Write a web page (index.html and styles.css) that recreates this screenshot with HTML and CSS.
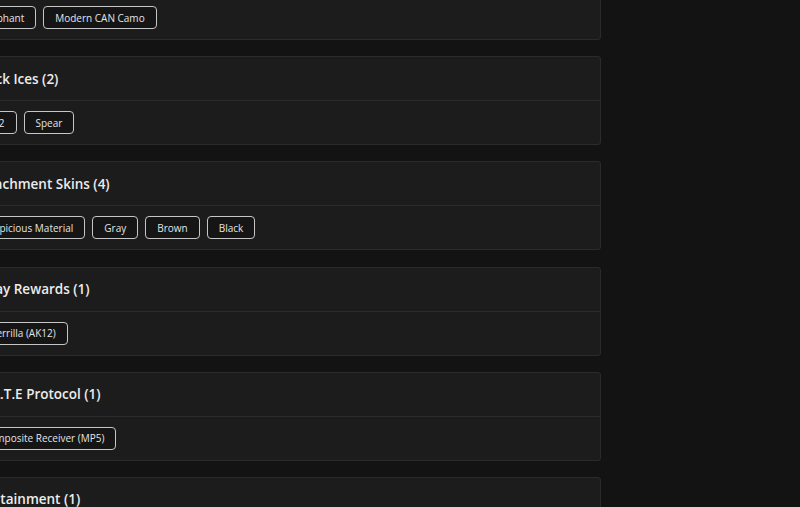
FILE: index.html
```html
<!DOCTYPE html>
<html lang="en">
<head>
<meta charset="utf-8">
<title>Categories</title>
<link rel="stylesheet" href="styles.css">
</head>
<body>
<main class="list">
  <section class="card">
    <header class="card-head">Camo Pack (2)</header>
    <div class="card-body"><span class="chip">Elephant</span><span class="chip">Modern CAN Camo</span></div>
  </section>
  <section class="card">
    <header class="card-head">Black Ices (2)</header>
    <div class="card-body"><span class="chip">Ice 2</span><span class="chip">Spear</span></div>
  </section>
  <section class="card">
    <header class="card-head">Attachment Skins (4)</header>
    <div class="card-body"><span class="chip">Suspicious Material</span><span class="chip">Gray</span><span class="chip">Brown</span><span class="chip">Black</span></div>
  </section>
  <section class="card">
    <header class="card-head">Relay Rewards (1)</header>
    <div class="card-body"><span class="chip">Guerrilla (AK12)</span></div>
  </section>
  <section class="card">
    <header class="card-head">M.A.T.E Protocol (1)</header>
    <div class="card-body"><span class="chip">Composite Receiver (MP5)</span></div>
  </section>
  <section class="card">
    <header class="card-head">Containment (1)</header>
    <div class="card-body"><span class="chip">Containment Unit</span></div>
  </section>
</main>
</body>
</html>
```
FILE: styles.css
```css
html, body {
  margin: 0;
  padding: 0;
  background: #131313;
  overflow: hidden;
}
body {
  font-family: "Open Sans", "DejaVu Sans", sans-serif;
  color: #e6e6e6;
}
.list {
  width: 645px;
  margin-left: -44px;
  margin-top: -49px;
  display: flex;
  flex-direction: column;
  gap: 16.2px;
}
.card {
  background: #1c1c1c;
  border: 1px solid #2b2b2b;
  border-radius: 3px;
}
.card-head {
  height: 43px;
  display: flex;
  align-items: center;
  padding: 0 18px;
  border-bottom: 1px solid #2b2b2b;
  font-size: 13.5px;
  font-weight: 600;
  color: #ececec;
}
.card-body {
  height: 43px;
  display: flex;
  align-items: center;
  gap: 7px;
  padding: 0 14px;
}
.chip {
  height: 23px;
  box-sizing: border-box;
  display: inline-flex;
  align-items: center;
  padding: 0 11px;
  border: 1px solid #c6c6c6;
  border-radius: 4px;
  background: #151515;
  font-size: 10px;
  font-weight: 500;
  color: #e4e4e4;
  white-space: nowrap;
}
```
